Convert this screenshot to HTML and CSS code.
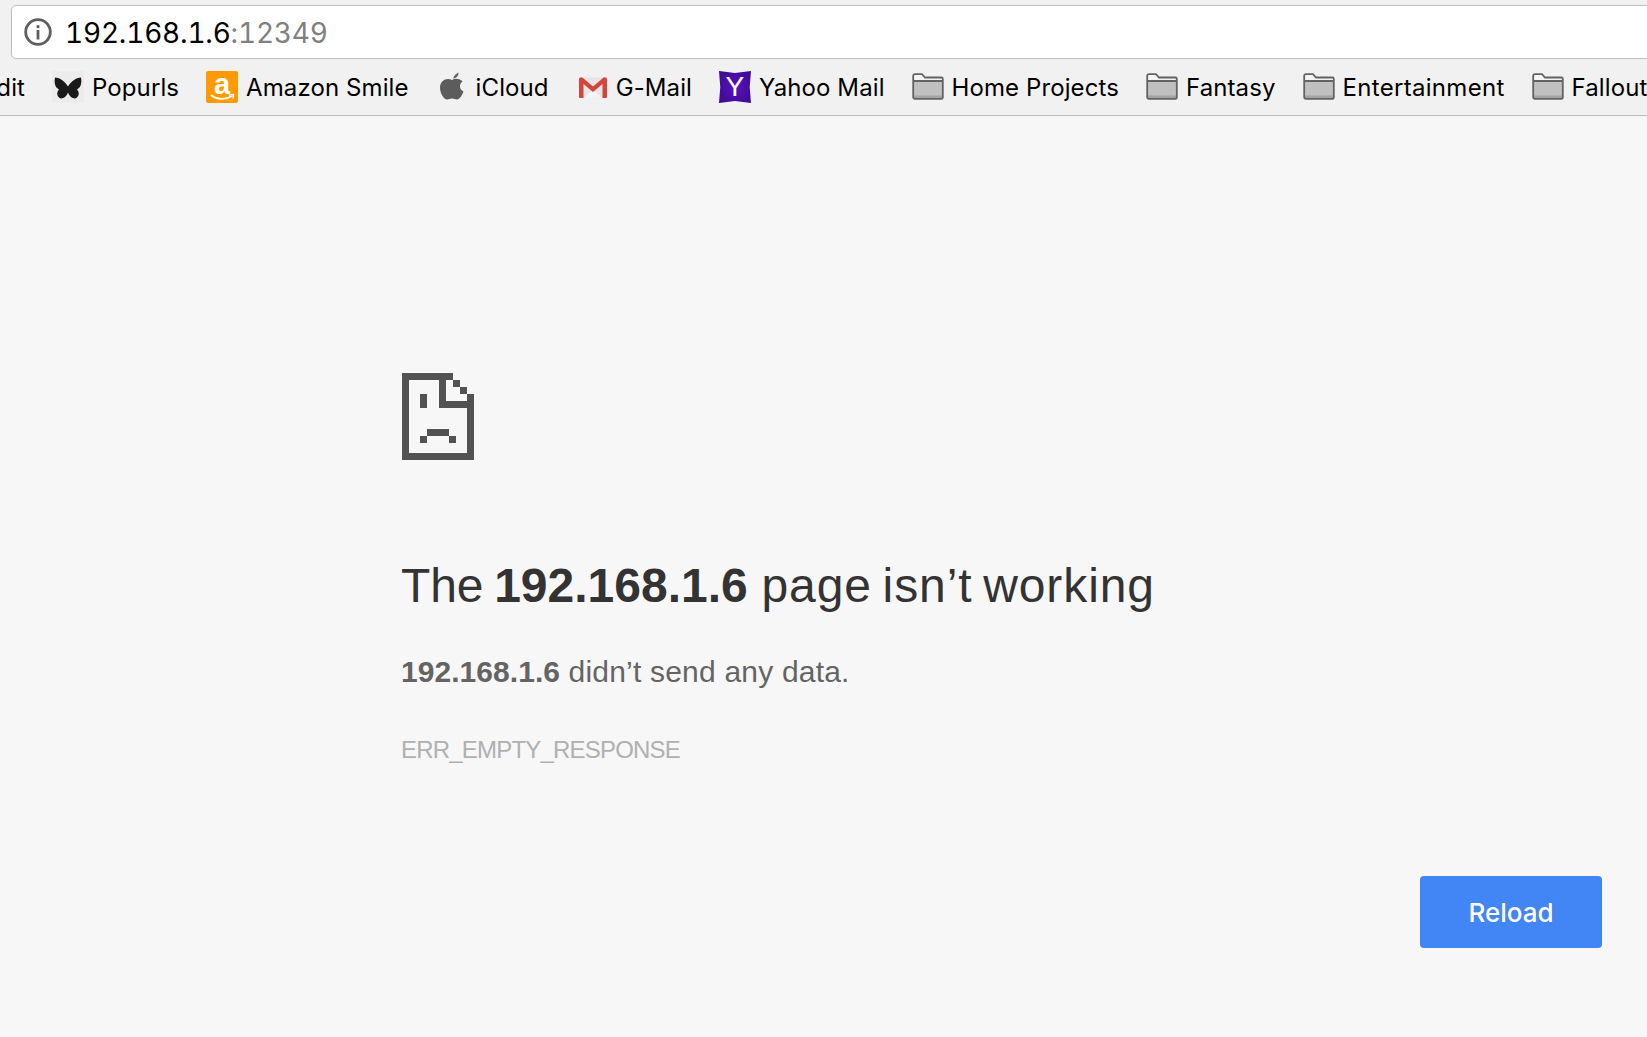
FILE: index.html
```html
<!DOCTYPE html>
<html lang="en">
<head>
<meta charset="utf-8">
<title>192.168.1.6</title>
<link rel="stylesheet" href="styles.css">
</head>
<body>
<header class="toolbar">
  <div class="omnibox">
    <svg class="info" viewBox="0 0 28 28" width="28" height="28"><circle cx="14" cy="14" r="12.300" fill="none" stroke="#5f5f5f" stroke-width="2.800"/><rect x="12.600" y="12" width="2.800" height="9.500" fill="#5f5f5f"/><rect x="12.600" y="7.200" width="2.800" height="3" fill="#5f5f5f"/></svg>
    <span class="url">192.168.1.6<span class="port">:12349</span></span>
  </div>
  <nav class="bookmarks">
    <a class="bm first">Reddit</a>
    <a class="bm"><svg class="ico" viewBox="0 0 32 32"><rect width="32" height="32" fill="#ececec"/><path d="M3 6.500 C8 6.500 13 10.500 16 15.500 C19 10.500 24 6.500 29 6.500 C30 11.500 29 16.500 25 18.500 C28 21.500 27 26.500 23 27.500 C20 27.500 17 24.500 16 21.500 C15 24.500 12 27.500 9 27.500 C5 26.500 4 21.500 7 18.500 C3 16.500 2 11.500 3 6.500Z" fill="#1a1a1a"/></svg>Popurls</a>
    <a class="bm"><span class="ico amazon"><span class="amazon-a">a</span><svg class="smile" viewBox="0 0 32 32"><path d="M5 24 C11 29 20 29 26 25" fill="none" stroke="#fff" stroke-width="1.800"/><path d="M23 24 L27.500 23.500 L27 27.500" fill="none" stroke="#fff" stroke-width="1.400"/></svg></span>Amazon Smile</a>
    <a class="bm"><svg class="ico" viewBox="0 0 32 32"><path d="M17 7.500 C18 4.500 20 2.500 22.500 1.500 C23 4.500 20 7.500 17 7.500Z" fill="#666"/><path d="M16 9 C19 7 24 7 26.500 10.500 C23 12.500 23 18.500 27.500 20.500 C26 24.500 23.500 28.500 21 28.500 C19 28.500 18 27.500 16 27.500 C14 27.500 13 28.500 11 28.500 C8 28.500 4 22.500 4 16.500 C4 9.500 11 6 16 9Z" fill="#5c5c5c"/></svg>iCloud</a>
    <a class="bm"><svg class="ico" viewBox="0 0 32 32"><rect x="3" y="6.500" width="28" height="20.500" fill="#e6e6e6"/><path d="M8 27 L17 19 L26 27Z" fill="#f5f5f5"/><path d="M3 8.500 C3 6.500 5.500 5.500 7 7 L17 15.500 L27 7 C28.500 5.500 31 6.500 31 8.500 V25.500 C31 26.500 30.500 27 29.500 27 H26.500 V13 L17 21 L7.500 13 V27 H4.500 C3.500 27 3 26.500 3 25.500Z" fill="#d5443a"/></svg>G-Mail</a>
    <a class="bm"><span class="ico yahoo">Y</span>Yahoo Mail</a>
    <a class="bm"><svg class="ico" viewBox="0 0 32 32"><use href="#folder"/></svg>Home Projects</a>
    <a class="bm"><svg class="ico" viewBox="0 0 32 32"><use href="#folder"/></svg>Fantasy</a>
    <a class="bm wide"><svg class="ico" viewBox="0 0 32 32"><use href="#folder"/></svg>Entertainment</a>
    <a class="bm"><svg class="ico" viewBox="0 0 32 32"><use href="#folder"/></svg>Fallout</a>
  </nav>
  <svg class="defs" width="0" height="0"><defs><g id="folder"><path d="M1.200 26 V5 C1.200 3.800 1.800 3.200 3 3.200 H10 L13 6.500 H29.500 C30.400 6.500 30.800 7 30.800 8 V26 C30.800 27.200 30.400 27.800 29.500 27.800 H2.500 C1.600 27.800 1.200 27.200 1.200 26Z" fill="#f4f4f4"/><rect x="2" y="10" width="28" height="17" fill="#c0c0c0"/><rect x="2" y="24.500" width="28" height="3" fill="#a4a4a4"/><path d="M1.200 26 V5 C1.200 3.800 1.800 3.200 3 3.200 H10 L13 6.500 H29.500 C30.400 6.500 30.800 7 30.800 8 V26 C30.800 27.200 30.400 27.800 29.500 27.800 H2.500 C1.600 27.800 1.200 27.200 1.200 26Z M1.500 10 H30.500" fill="none" stroke="#636363" stroke-width="1.800"/></g></defs></svg>
</header>
<main class="page">
  <svg class="sad" viewBox="0 0 216 261" width="72" height="87" shape-rendering="crispEdges" fill="#525252">
    <rect width="153" height="21"/><rect width="21" height="261"/><rect y="240" width="216" height="21"/><rect x="195" y="62" width="21" height="199"/>
    <rect x="153" y="21" width="21" height="21"/><rect x="174" y="41" width="21" height="21"/>
    <rect x="111" width="21" height="106"/><rect x="111" y="85" width="105" height="21"/>
    <rect x="54" y="62" width="21" height="44"/>
    <rect x="75" y="168" width="66" height="21"/><rect x="54" y="189" width="21" height="21"/><rect x="141" y="189" width="21" height="21"/>
  </svg>
  <h1 class="title"><span class="lead">The</span> <b>192.168.1.6</b> page isn’t working</h1>
  <p class="detail"><b>192.168.1.6</b> didn’t send any data.</p>
  <p class="code">ERR_EMPTY_RESPONSE</p>
  <div class="actions"><button class="reload">Reload</button></div>
</main>
</body>
</html>
```
FILE: styles.css
```css
* { box-sizing: border-box; }
html, body { margin: 0; height: 100%; }
body { background: #f7f7f7; overflow: hidden; font-family: "Liberation Sans", Arial, sans-serif; }
.toolbar { height: 116px; background: #f1f1f1; border-bottom: 1px solid #bcbcbc; padding: 5px 0 0 11px; overflow: hidden; }
.omnibox { display: flex; align-items: center; height: 54px; width: 1700px; background: #fff; border: 1px solid #bdbdbd; border-radius: 5px; padding-left: 12px; }
.info { flex: none; }
.url { margin: 2px 0 0 13px; font: 400 28px "Inter", sans-serif; font-variant-numeric: tabular-nums; color: #000; letter-spacing: -0.2px; white-space: nowrap; }
.port { color: #808080; }
.bookmarks { display: flex; align-items: center; gap: 27px; margin: 11px 0 0 -56px; height: 34px; white-space: nowrap; font: 400 24px "Inter", sans-serif; letter-spacing: 0.1px; color: #000; }
.bm { display: flex; align-items: center; gap: 8px; flex: none; }
.first { width: 70px; justify-content: flex-end; }
.wide { letter-spacing: 0.3px; }
.ico { flex: none; width: 32px; height: 32px; display: block; }
.amazon { position: relative; background: #ff9a00; border-radius: 2px; color: #fff; text-align: center; }
.amazon-a { display: block; height: 32px; font: 700 29px/26px "Liberation Sans", sans-serif; }
.smile { position: absolute; left: 0; top: 0; width: 32px; height: 32px; }
.yahoo { background: radial-gradient(circle, #5a10c0 0%, #3a0a8c 100%); color: #fff; font: 400 28px/32px "Liberation Sans", sans-serif; text-align: center; clip-path: polygon(0 0, 50% 6%, 100% 0, 96% 50%, 100% 100%, 50% 94%, 0 100%, 4% 50%); }
.defs { position: absolute; }
.page { padding: 257px 0 0 401px; }
.sad { display: block; margin-left: 1px; }
.title { margin: 98px 0 0; font-size: 48px; line-height: 56px; font-weight: 400; color: #333; letter-spacing: 0.9px; word-spacing: -3.5px; white-space: nowrap; }
.lead { letter-spacing: -0.1px; }
.title b { font-weight: 700; letter-spacing: 0; margin-right: 3px; }
.detail { margin: 40px 0 0; font-size: 30px; line-height: 36px; color: #646464; letter-spacing: 0.2px; }
.detail b { letter-spacing: 0.05px; }
.code { margin: 45px 0 0; font-size: 24px; line-height: 30px; color: #b0b0b0; letter-spacing: -0.8px; text-transform: uppercase; }
.actions { display: flex; justify-content: flex-end; margin: 111px 45px 0 0; }
.reload { width: 182px; height: 72px; border: 0; border-radius: 4px; background: #4285f4; color: #fff; font: 500 26px "Inter", sans-serif; }
```
